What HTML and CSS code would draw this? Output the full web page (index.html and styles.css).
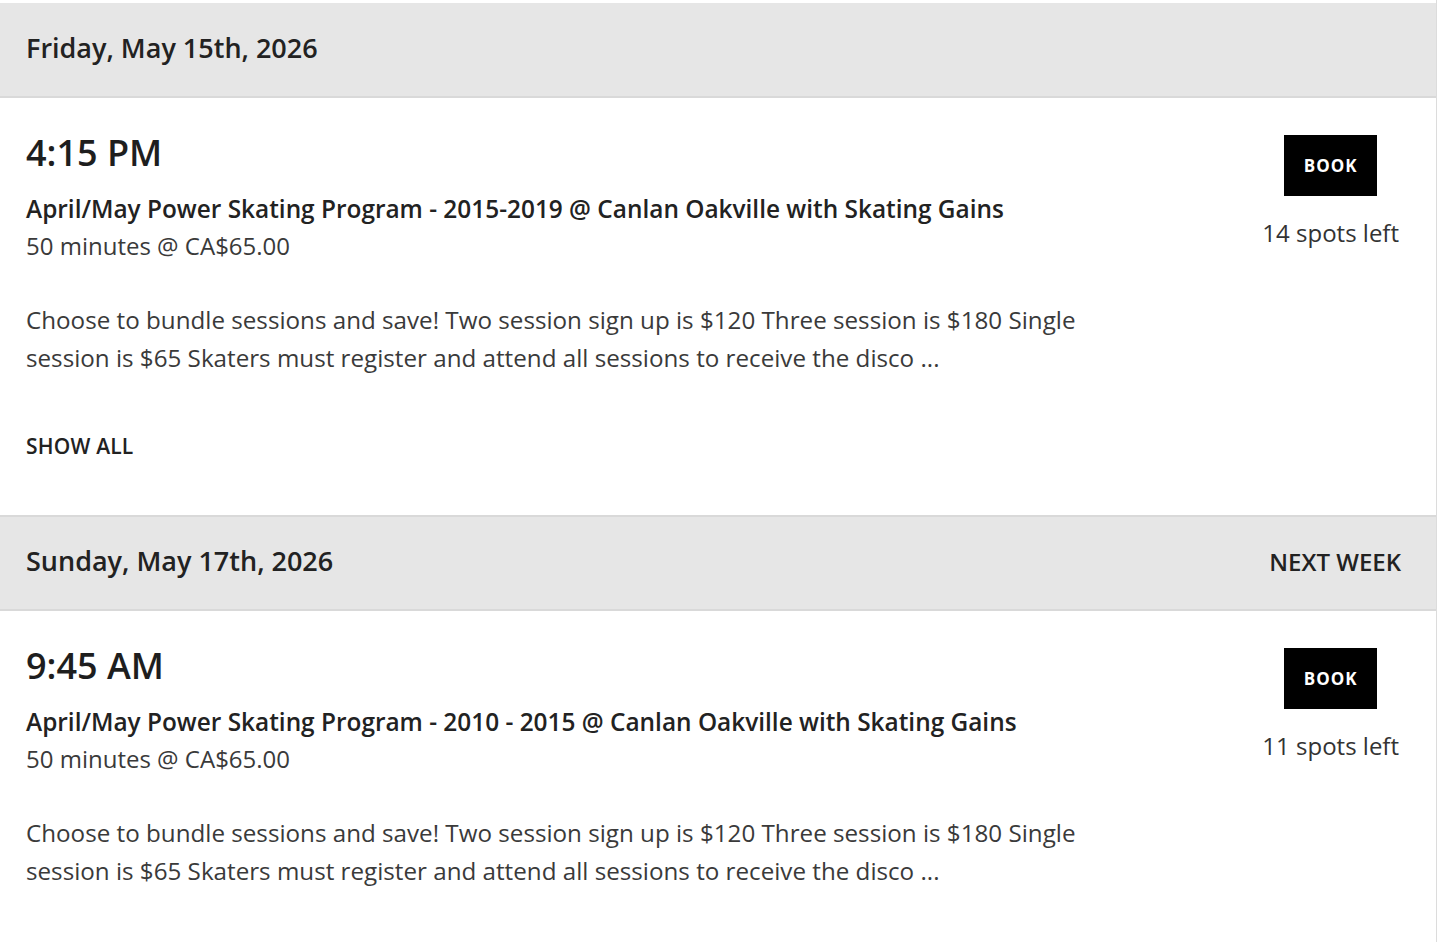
FILE: index.html
```html
<!DOCTYPE html>
<html>
<head>
<meta charset="utf-8">
<link rel="stylesheet" href="styles.css">
</head>
<body>
<div class="list">
  <section class="day">
    <div class="day-header">
      <h2 class="day-title">Friday, May 15th, 2026</h2>
    </div>
    <div class="session">
      <div class="session-info">
        <div class="time">4:15 PM</div>
        <div class="title">April/May Power Skating Program - 2015-2019 @ Canlan Oakville with Skating Gains</div>
        <div class="meta">50 minutes @ CA$65.00</div>
        <p class="desc">Choose to bundle sessions and save! Two session sign up is $120 Three session is $180 Single session is $65 Skaters must register and attend all sessions to receive the disco ...</p>
        <div class="show-all">SHOW ALL</div>
      </div>
      <div class="session-action">
        <button class="book">BOOK</button>
        <div class="spots">14 spots left</div>
      </div>
    </div>
  </section>
  <section class="day">
    <div class="day-header">
      <h2 class="day-title">Sunday, May 17th, 2026</h2>
      <div class="next-week">NEXT WEEK</div>
    </div>
    <div class="session">
      <div class="session-info">
        <div class="time">9:45 AM</div>
        <div class="title">April/May Power Skating Program - 2010 - 2015 @ Canlan Oakville with Skating Gains</div>
        <div class="meta">50 minutes @ CA$65.00</div>
        <p class="desc">Choose to bundle sessions and save! Two session sign up is $120 Three session is $180 Single session is $65 Skaters must register and attend all sessions to receive the disco ...</p>
      </div>
      <div class="session-action">
        <button class="book">BOOK</button>
        <div class="spots">11 spots left</div>
      </div>
    </div>
  </section>
</div>
</body>
</html>
```
FILE: styles.css
```css
html, body {
  margin: 0;
  padding: 0;
  background: #ffffff;
  height: 942px;
  overflow: hidden;
}
body {
  font-family: "Open Sans", "Liberation Sans", sans-serif;
  color: #333333;
}
.list {
  width: 1436px;
  height: 939px;
  overflow: hidden;
  padding-top: 3px;
  border-right: 1px solid #dcdcdc;
}
.day-header {
  height: 95px;
  background: #e6e6e6;
  border-bottom: 2px solid #d9d9d9;
  display: flex;
  align-items: center;
  justify-content: space-between;
  padding: 0 35px 4px 26px;
  box-sizing: border-box;
}
.day + .day .day-header {
  border-top: 2px solid #d9d9d9;
  height: 96px;
  padding-bottom: 6px;
}
.day-title {
  margin: 0;
  font-size: 27px;
  font-weight: 600;
  color: #222222;
}
.next-week {
  font-size: 24px;
  font-weight: 600;
  color: #222222;
  margin-top: 2px;
}
.session {
  display: flex;
  justify-content: space-between;
  padding: 33px 37px 0 26px;
  height: 417px;
  box-sizing: border-box;
}
.session-info {
  width: 1080px;
}
.time {
  font-size: 36px;
  font-weight: 600;
  color: #1e1e1e;
  line-height: 44px;
}
.title {
  margin-top: 18px;
  font-size: 24.4px;
  font-weight: 600;
  color: #222222;
  line-height: 32px;
}
.meta {
  margin-top: 5px;
  font-size: 24px;
  line-height: 32px;
  color: #3a3a3a;
}
.desc {
  margin: 39px 0 0;
  font-size: 24.2px;
  line-height: 38px;
  color: #3a3a3a;
}
.show-all {
  margin-top: 55px;
  font-size: 21px;
  font-weight: 600;
  letter-spacing: 0.2px;
  color: #222222;
}
.session-action {
  display: flex;
  flex-direction: column;
  align-items: center;
  padding-top: 4px;
}
.book {
  width: 93px;
  height: 61px;
  background: #000000;
  color: #ffffff;
  border: none;
  font-family: inherit;
  font-size: 17px;
  font-weight: 700;
  letter-spacing: 1px;
  padding: 0;
}
.spots {
  margin-top: 20px;
  font-size: 24px;
  color: #333333;
}
```
